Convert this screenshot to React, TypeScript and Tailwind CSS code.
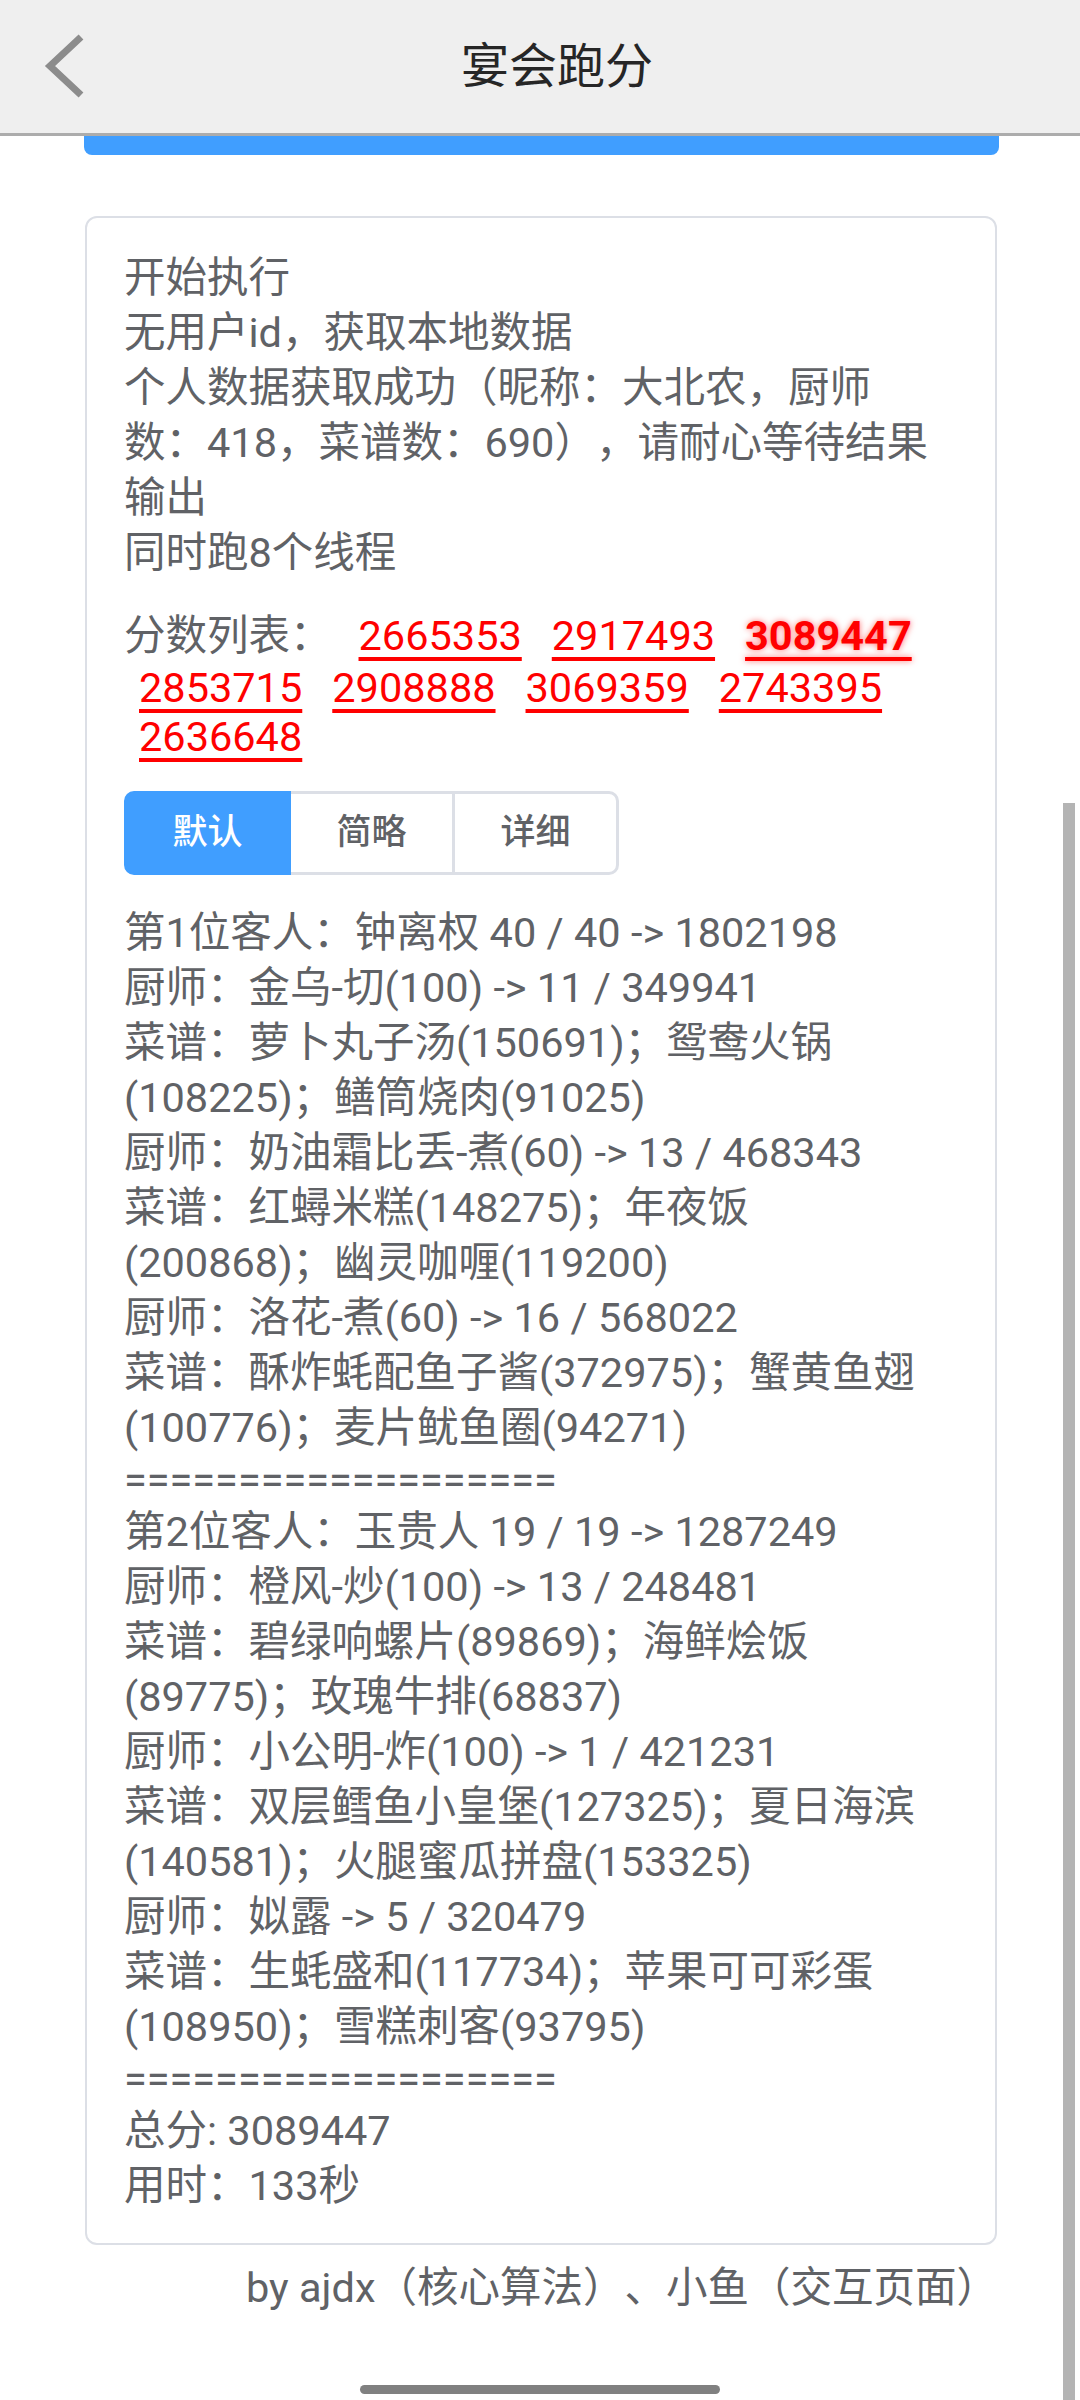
import React, { useState } from 'react';

const logLines = [
  '开始执行',
  '无用户id，获取本地数据',
  '个人数据获取成功（昵称：大北农，厨师数：418，菜谱数：690），请耐心等待结果输出',
  '同时跑8个线程',
];

const scores = ['2665353', '2917493', '3089447', '2853715', '2908888', '3069359', '2743395', '2636648'];
const best = '3089447';

const SEP = '===================';

const resultLines = [
  '第1位客人：钟离权 40 / 40 -> 1802198',
  '厨师：金乌-切(100) -> 11 / 349941',
  '菜谱：萝卜丸子汤(150691)；鸳鸯火锅(108225)；鳝筒烧肉(91025)',
  '厨师：奶油霜比丢-煮(60) -> 13 / 468343',
  '菜谱：红蟳米糕(148275)；年夜饭(200868)；幽灵咖喱(119200)',
  '厨师：洛花-煮(60) -> 16 / 568022',
  '菜谱：酥炸蚝配鱼子酱(372975)；蟹黄鱼翅(100776)；麦片鱿鱼圈(94271)',
  SEP,
  '第2位客人：玉贵人 19 / 19 -> 1287249',
  '厨师：橙风-炒(100) -> 13 / 248481',
  '菜谱：碧绿响螺片(89869)；海鲜烩饭(89775)；玫瑰牛排(68837)',
  '厨师：小公明-炸(100) -> 1 / 421231',
  '菜谱：双层鳕鱼小皇堡(127325)；夏日海滨(140581)；火腿蜜瓜拼盘(153325)',
  '厨师：姒露 -> 5 / 320479',
  '菜谱：生蚝盛和(117734)；苹果可可彩蛋(108950)；雪糕刺客(93795)',
  SEP,
  '总分: 3089447',
  '用时：133秒',
];

const modes = ['默认', '简略', '详细'];

export default function App() {
  const [mode, setMode] = useState(0);

  return (
    <div className="relative w-[1080px] h-[2400px] overflow-hidden bg-white font-['Roboto','Noto_Sans_CJK_SC',sans-serif] [text-spacing-trim:space-all] [text-autospace:no-autospace]">
      {/* top bar */}
      <div className="relative h-[136px] bg-[#efefef] border-b-[3px] border-[#acacac] flex items-center justify-center pl-[34px]">
        <svg className="absolute left-[38px] top-[30px]" width="50" height="72" viewBox="0 0 50 72">
          <polyline points="43,7 12,36 43,65" fill="none" stroke="#8c8c8c" strokeWidth="7" />
        </svg>
        <span className="text-[48px] leading-none text-[#262626]">宴会跑分</span>
      </div>

      {/* bottom of the run button, scrolled under the bar */}
      <div className="ml-[84px] w-[915px] h-[19px] bg-[#409eff] rounded-b-[8px]" />

      <div className="mt-[61px] ml-[85px] w-[912px] border-2 border-[#dcdfe6] rounded-[12px] pt-[32px] pb-[30px] pl-[37px] pr-[49px] text-[41.5px] text-[#606266]">
        <div className="leading-[55px]">
          {logLines.map((l, i) => (
            <div key={i}>{l}</div>
          ))}
        </div>

        <div className="mt-[28px] flex flex-wrap items-center">
          <span className="h-[55px] leading-[55px] pr-[12px]">分数列表：</span>
          {scores.map((s) => (
            <a
              key={s}
              className={
                s === best
                  ? 'mx-[15px] h-[49px] leading-[49px] text-[#ff0000] font-bold underline decoration-[4px] underline-offset-[7px] [text-shadow:0_0_6px_rgba(255,0,0,0.55)]'
                  : 'mx-[15px] h-[49px] leading-[49px] text-[#ff0000] underline decoration-[4px] underline-offset-[7px]'
              }
            >
              {s}
            </a>
          ))}
        </div>

        <div className="mt-[30px] flex">
          {modes.map((m, i) => (
            <button
              key={m}
              onClick={() => setMode(i)}
              className={
                'h-[84px] w-[167px] border-[3px] text-[35px] font-medium flex items-center justify-center ' +
                (i > 0 ? '-ml-[3px] ' : '') +
                (i === 0 ? 'rounded-l-[10px] ' : '') +
                (i === modes.length - 1 ? 'rounded-r-[10px] ' : '') +
                (mode === i ? 'bg-[#409eff] border-[#409eff] text-white relative' : 'bg-white border-[#dcdfe6] text-[#606266]')
              }
            >
              {m}
            </button>
          ))}
        </div>

        <div className="mt-[30px]">
          {resultLines.map((l, i) =>
            l === SEP ? (
              <div key={i} className="leading-[49px]">{l}</div>
            ) : (
              <div key={i} className="leading-[55px]">{l}</div>
            )
          )}
        </div>
      </div>

      <div className="mt-[15px] pr-[82px] text-right text-[41.5px] leading-[55px] text-[#606266]">
        by ajdx（核心算法）、小鱼（交互页面）
      </div>

      {/* scroll thumb + gesture bar */}
      <div className="absolute right-[5px] top-[803px] bottom-0 w-[12px] bg-[#b4b4b4]" />
      <div className="absolute bottom-[6px] left-[360px] w-[360px] h-[9px] rounded-full bg-[#808080]" />
    </div>
  );
}
